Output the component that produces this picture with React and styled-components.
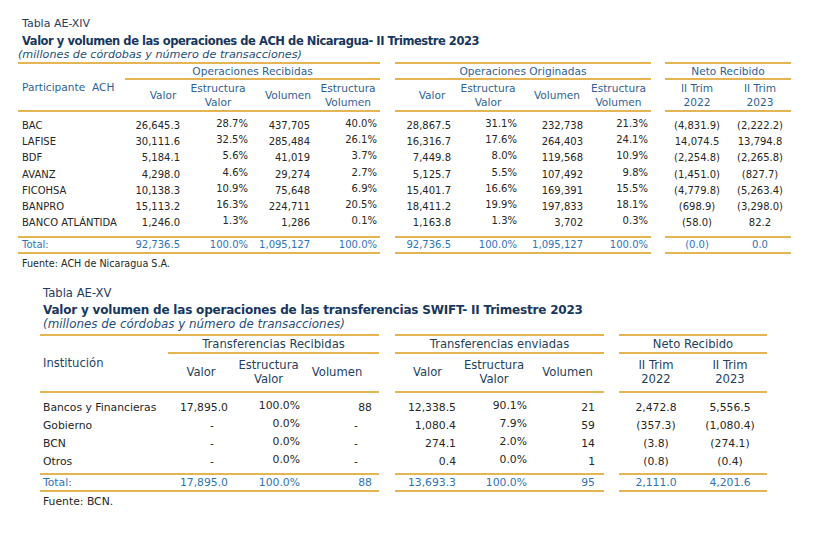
import styled, { createGlobalStyle } from "styled-components";

const GOLD = "#e6b553";
const TOTAL_BLUE = "#2e74b5";

const GlobalStyle = createGlobalStyle`
  html, body {
    margin: 0;
    padding: 0;
    background: #ffffff;
  }
  body {
    font-family: "DejaVu Sans", Verdana, sans-serif;
    color: #222222;
  }
`;

const Page = styled.div`
  width: 827px;
  height: 533px;
  overflow: hidden;
  background: #ffffff;
`;

const Table = styled.section`
  padding-left: ${(p) => p.$left}px;
  padding-top: ${(p) => p.$top}px;
`;

const Caption = styled.div`
  font-size: ${(p) => p.$size}px;
  line-height: 14px;
  color: #1f3d63;
  padding-left: ${(p) => p.$indent}px;
`;

const Title = styled.div`
  font-size: ${(p) => p.$size}px;
  font-weight: bold;
  line-height: 14px;
  letter-spacing: ${(p) => p.$spacing}px;
  color: #17375e;
  margin-top: 3px;
  padding-left: ${(p) => p.$indent}px;
  white-space: nowrap;
`;

const Subtitle = styled.div`
  font-size: ${(p) => p.$size}px;
  font-style: italic;
  line-height: 14px;
  color: #1f4e79;
  padding-left: ${(p) => p.$indent}px;
  margin-bottom: ${(p) => p.$after}px;
  white-space: nowrap;
`;

const Segments = styled.div`
  display: flex;
  align-items: flex-start;
`;

const Segment = styled.div`
  display: flex;
  flex-direction: column;
  margin-left: ${(p) => p.$gap}px;
  font-size: ${(p) => p.$font}px;
`;

const Head = styled.div`
  display: grid;
  grid-template-columns: ${(p) => p.$cols};
  grid-template-rows: auto ${(p) => p.$colHeadH}px;
  border-top: 2px solid ${GOLD};
  border-bottom: 2px solid ${GOLD};
  color: ${(p) => p.$color};
  font-size: ${(p) => p.$headFont}px;
`;

const LabelHead = styled.div`
  grid-row: 1 / span 2;
  grid-column: 1;
  padding-top: ${(p) => p.$top}px;
  padding-left: ${(p) => p.$indent}px;
  line-height: 12px;
  white-space: pre;
`;

const GroupHead = styled.div`
  grid-row: 1;
  grid-column: ${(p) => p.$start} / -1;
  height: ${(p) => p.$h}px;
  line-height: ${(p) => p.$h}px;
  text-align: center;
  border-bottom: 2px solid ${GOLD};
  white-space: nowrap;
`;

const ColHead = styled.div`
  grid-row: 2;
  display: flex;
  align-items: center;
  justify-content: center;
  text-align: center;
  line-height: 14px;
  padding-left: ${(p) => Math.max(0, 2 * p.$hs)}px;
  padding-right: ${(p) => Math.max(0, -2 * p.$hs)}px;
`;

const Body = styled.div`
  display: grid;
  grid-template-columns: ${(p) => p.$cols};
  grid-auto-rows: ${(p) => p.$rowH}px;
  padding-top: ${(p) => p.$padTop}px;
  padding-bottom: ${(p) => p.$padBottom}px;
  color: #262626;
`;

const TotalRow = styled.div`
  display: grid;
  grid-template-columns: ${(p) => p.$cols};
  height: ${(p) => p.$h}px;
  border-top: 2px solid ${GOLD};
  border-bottom: 2px solid ${GOLD};
  color: ${TOTAL_BLUE};
`;

const Cell = styled.div`
  display: flex;
  align-items: center;
  justify-content: ${(p) =>
    p.$align === "center" ? "center" : p.$align === "left" ? "flex-start" : "flex-end"};
  padding-right: ${(p) => p.$pad || 0}px;
  padding-left: ${(p) => p.$padL || 0}px;
  padding-bottom: ${(p) => (p.$raise ? 4 : 0)}px;
  white-space: nowrap;
`;

const Source = styled.div`
  font-size: ${(p) => p.$size}px;
  line-height: 14px;
  margin-top: ${(p) => p.$top}px;
  padding-left: ${(p) => p.$indent}px;
  color: #262626;
`;

const ach = {
  left: 18,
  top: 17,
  indent: 4,
  font: 10,
  headFont: 10.6,
  headColor: "#2f5f96",
  groupH: 14,
  colHeadH: 30,
  labelTop: 17,
  rowH: 16.3,
  padTop: 5,
  padBottom: 4.9,
  totalH: 14,
  dashExtra: 0,
  label: { text: "Participante  ACH", w: 107 },
  segments: [
    {
      gap: 0,
      group: "Operaciones Recibidas",
      cols: [
        { w: 58, head: "Valor", pad: 3, hs: 9 },
        { w: 68, head: "Estructura\nValor", pad: 3, hs: 1 },
        { w: 62, head: "Volumen", pad: 3, hs: 6 },
        { w: 67, head: "Estructura\nVolumen", pad: 3, hs: 1.5 },
      ],
    },
    {
      gap: 15,
      group: "Operaciones Originadas",
      cols: [
        { w: 59, head: "Valor", pad: 3, hs: 7.5 },
        { w: 66, head: "Estructura\nValor", pad: 3, hs: 1 },
        { w: 66, head: "Volumen", pad: 3, hs: 4 },
        { w: 65, head: "Estructura\nVolumen", pad: 3, hs: 0 },
      ],
    },
    {
      gap: 14,
      group: "Neto Recibido",
      cols: [
        { w: 64, head: "II Trim\n2022", align: "center", hs: 0 },
        { w: 62, head: "II Trim\n2023", align: "center", hs: 0 },
      ],
    },
  ],
  rows: [
    ["BAC", "26,645.3", "28.7%", "437,705", "40.0%", "28,867.5", "31.1%", "232,738", "21.3%", "(4,831.9)", "(2,222.2)"],
    ["LAFISE", "30,111.6", "32.5%", "285,484", "26.1%", "16,316.7", "17.6%", "264,403", "24.1%", "14,074.5", "13,794.8"],
    ["BDF", "5,184.1", "5.6%", "41,019", "3.7%", "7,449.8", "8.0%", "119,568", "10.9%", "(2,254.8)", "(2,265.8)"],
    ["AVANZ", "4,298.0", "4.6%", "29,274", "2.7%", "5,125.7", "5.5%", "107,492", "9.8%", "(1,451.0)", "(827.7)"],
    ["FICOHSA", "10,138.3", "10.9%", "75,648", "6.9%", "15,401.7", "16.6%", "169,391", "15.5%", "(4,779.8)", "(5,263.4)"],
    ["BANPRO", "15,113.2", "16.3%", "224,711", "20.5%", "18,411.2", "19.9%", "197,833", "18.1%", "(698.9)", "(3,298.0)"],
    ["BANCO ATLÁNTIDA", "1,246.0", "1.3%", "1,286", "0.1%", "1,163.8", "1.3%", "3,702", "0.3%", "(58.0)", "82.2"],
  ],
  total: ["Total:", "92,736.5", "100.0%", "1,095,127", "100.0%", "92,736.5", "100.0%", "1,095,127", "100.0%", "(0.0)", "0.0"],
};

const swift = {
  left: 40,
  top: 15,
  indent: 3,
  font: 10.8,
  headFont: 11.6,
  headColor: "#233f60",
  groupH: 16,
  colHeadH: 37,
  labelTop: 21,
  rowH: 17.8,
  padTop: 6,
  padBottom: 2.8,
  totalH: 15,
  dashExtra: 14,
  label: { text: "Institución", w: 128 },
  segments: [
    {
      gap: 0,
      group: "Transferencias Recibidas",
      cols: [
        { w: 64, head: "Valor", pad: 4, hs: 1 },
        { w: 71, head: "Estructura\nValor", pad: 3, hs: 1 },
        { w: 76, head: "Volumen", pad: 7, hs: -4 },
      ],
    },
    {
      gap: 16,
      group: "Transferencias enviadas",
      cols: [
        { w: 65, head: "Valor", pad: 4, hs: 0 },
        { w: 70, head: "Estructura\nValor", pad: 3, hs: -1 },
        { w: 74, head: "Volumen", pad: 9, hs: 0.5 },
      ],
    },
    {
      gap: 15,
      group: "Neto Recibido",
      cols: [
        { w: 74, head: "II Trim\n2022", align: "center", hs: 0 },
        { w: 74, head: "II Trim\n2023", align: "center", hs: 0 },
      ],
    },
  ],
  rows: [
    ["Bancos y Financieras", "17,895.0", "100.0%", "88", "12,338.5", "90.1%", "21", "2,472.8", "5,556.5"],
    ["Gobierno", "-", "0.0%", "-", "1,080.4", "7.9%", "59", "(357.3)", "(1,080.4)"],
    ["BCN", "-", "0.0%", "-", "274.1", "2.0%", "14", "(3.8)", "(274.1)"],
    ["Otros", "-", "0.0%", "-", "0.4", "0.0%", "1", "(0.8)", "(0.4)"],
  ],
  total: ["Total:", "17,895.0", "100.0%", "88", "13,693.3", "100.0%", "95", "2,111.0", "4,201.6"],
};

function ValueCell({ col, value, raise, dashExtra }) {
  const pad = (col.pad || 0) + (value === "-" ? dashExtra : 0);
  return (
    <Cell $align={col.align} $pad={col.align === "center" ? 0 : pad} $raise={raise}>
      {value}
    </Cell>
  );
}

function DataSegment({ spec, seg, index, offset }) {
  const first = index === 0;
  const widths = (first ? [spec.label.w] : []).concat(seg.cols.map((c) => c.w));
  const cols = widths.map((w) => `${w}px`).join(" ");
  const pick = (row) => row.slice(offset, offset + seg.cols.length);

  return (
    <Segment $gap={seg.gap} $font={spec.font}>
      <Head $cols={cols} $colHeadH={spec.colHeadH} $color={spec.headColor} $headFont={spec.headFont}>
        {first && (
          <LabelHead $top={spec.labelTop} $indent={spec.indent}>
            {spec.label.text}
          </LabelHead>
        )}
        <GroupHead $start={first ? 2 : 1} $h={spec.groupH}>
          {seg.group}
        </GroupHead>
        {seg.cols.map((c, i) => (
          <ColHead key={i} $hs={c.hs} style={{ gridColumn: (first ? 2 : 1) + i }}>
            <span style={{ whiteSpace: "pre" }}>{c.head}</span>
          </ColHead>
        ))}
      </Head>
      <Body $cols={cols} $rowH={spec.rowH} $padTop={spec.padTop} $padBottom={spec.padBottom}>
        {spec.rows.map((row, r) => [
          first ? (
            <Cell key={`l${r}`} $align="left" $padL={spec.indent}>
              {row[0]}
            </Cell>
          ) : null,
          ...pick(row).map((v, i) => (
            <ValueCell
              key={`${r}-${i}`}
              col={seg.cols[i]}
              value={v}
              raise={v.endsWith("%")}
              dashExtra={spec.dashExtra}
            />
          )),
        ])}
      </Body>
      <TotalRow $cols={cols} $h={spec.totalH}>
        {first && (
          <Cell $align="left" $padL={spec.indent}>
            {spec.total[0]}
          </Cell>
        )}
        {pick(spec.total).map((v, i) => (
          <ValueCell key={i} col={seg.cols[i]} value={v} dashExtra={0} />
        ))}
      </TotalRow>
    </Segment>
  );
}

function DataTable({ spec }) {
  let offset = 1;
  return (
    <Segments>
      {spec.segments.map((seg, i) => {
        const el = <DataSegment key={i} spec={spec} seg={seg} index={i} offset={offset} />;
        offset += seg.cols.length;
        return el;
      })}
    </Segments>
  );
}

export default function App() {
  return (
    <Page>
      <GlobalStyle />
      <Table $left={ach.left} $top={ach.top}>
        <Caption $size={11} $indent={4}>
          Tabla AE-XIV
        </Caption>
        <Title $size={11.5} $spacing={-0.45} $indent={4}>
          Valor y volumen de las operaciones de ACH de Nicaragua- II Trimestre 2023
        </Title>
        <Subtitle $size={11.2} $indent={0} $after={0}>
          (millones de córdobas y número de transacciones)
        </Subtitle>
        <DataTable spec={ach} />
        <Source $size={9.6} $top={3} $indent={4}>
          Fuente: ACH de Nicaragua S.A.
        </Source>
      </Table>
      <Table $left={swift.left} $top={swift.top}>
        <Caption $size={11.6} $indent={3}>
          Tabla AE-XV
        </Caption>
        <Title $size={12} $spacing={-0.2} $indent={3}>
          Valor y volumen de las operaciones de las transferencias SWIFT- II Trimestre 2023
        </Title>
        <Subtitle $size={11.9} $indent={3} $after={3}>
          (millones de córdobas y número de transacciones)
        </Subtitle>
        <DataTable spec={swift} />
        <Source $size={10.8} $top={3} $indent={3}>
          Fuente: BCN.
        </Source>
      </Table>
    </Page>
  );
}
